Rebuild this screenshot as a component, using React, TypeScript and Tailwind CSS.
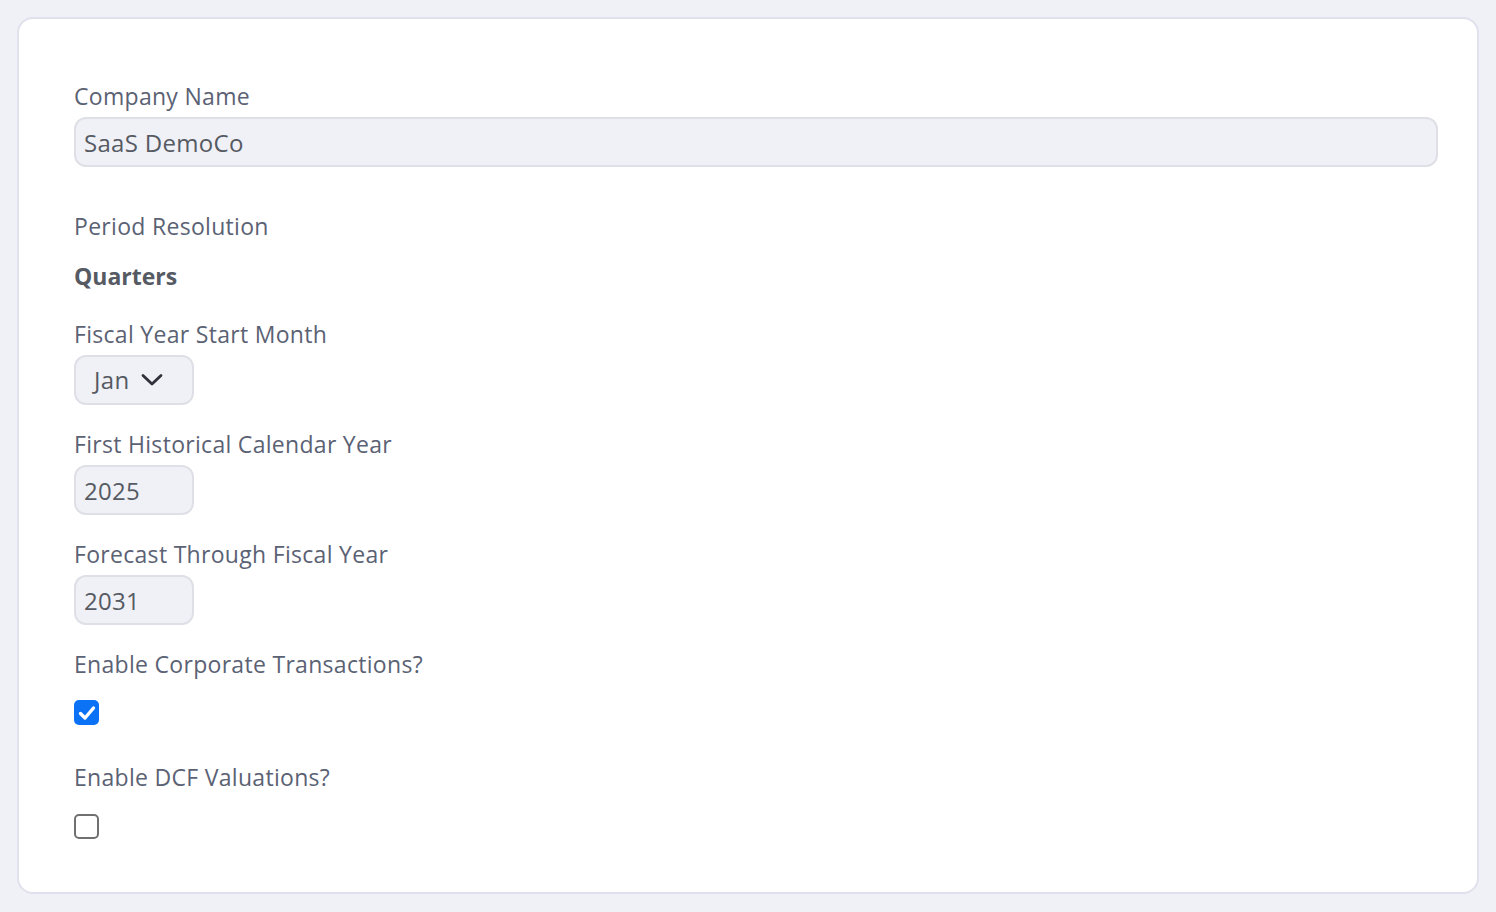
import { useState } from 'react';

const LABEL = 'block h-8 text-[23px] leading-8 tracking-[0.3px] text-[#5b6274]';
const FIELD =
  'h-[50px] rounded-xl border-2 border-[#dfe0e7] bg-[#f0f1f6] px-[8px] text-[24px] tracking-[0.3px] text-[#565a63] outline-none';

export default function App() {
  const [corporate, setCorporate] = useState(true);
  const [dcf, setDcf] = useState(false);

  return (
    <main className="min-h-screen bg-[#f0f1f6] p-[17px] font-['Open_Sans',sans-serif]">
      <div className="h-[877px] rounded-2xl border-2 border-[#e1e1ed] bg-white pl-[55px] pr-[39px] pt-[61px]">
        <label className={LABEL}>Company Name</label>
        <input
          defaultValue="SaaS DemoCo"
          className={`${FIELD} mt-[5px] block w-full`}
        />

        <div className="mt-[43px]">
          <span className={LABEL}>Period Resolution</span>
          <div className="mt-[18px] h-8 text-[23px] font-bold leading-8 text-[#565a63]">Quarters</div>
        </div>

        <div className="mt-[26px]">
          <label className={LABEL}>Fiscal Year Start Month</label>
          <div className={`${FIELD} mt-[5px] flex w-[120px] items-center gap-[12px] pl-[18px]`}>
            <span>Jan</span>
            <svg width="22" height="14" viewBox="0 0 22 14" fill="none">
              <path d="M2 2.5 L11 11 L20 2.5" stroke="#2f323a" strokeWidth="2.8" strokeLinecap="round" strokeLinejoin="round" />
            </svg>
          </div>
        </div>

        <div className="mt-[23px]">
          <label className={LABEL}>First Historical Calendar Year</label>
          <input defaultValue="2025" className={`${FIELD} mt-[5px] block w-[120px]`} />
        </div>

        <div className="mt-[23px]">
          <label className={LABEL}>Forecast Through Fiscal Year</label>
          <input defaultValue="2031" className={`${FIELD} mt-[5px] block w-[120px]`} />
        </div>

        <div className="mt-[23px]">
          <label className={LABEL}>Enable Corporate Transactions?</label>
          <Checkbox checked={corporate} onChange={() => setCorporate(!corporate)} className="mt-[20px]" />
        </div>

        <div className="mt-[36px]">
          <label className={LABEL}>Enable DCF Valuations?</label>
          <Checkbox checked={dcf} onChange={() => setDcf(!dcf)} className="mt-[21px]" />
        </div>
      </div>
    </main>
  );
}

function Checkbox({
  checked,
  onChange,
  className,
}: {
  checked: boolean;
  onChange: () => void;
  className?: string;
}) {
  return (
    <button
      type="button"
      onClick={onChange}
      className={`${className} flex h-[25px] w-[25px] items-center justify-center rounded-[5px] ${
        checked ? 'bg-[#0b72f6]' : 'border-2 border-[#707070] bg-white'
      }`}
    >
      {checked && (
        <svg width="18" height="16" viewBox="0 0 18 16" fill="none">
          <path d="M2.5 8.5 L7 13 L15.5 3" stroke="white" strokeWidth="3.4" strokeLinecap="round" strokeLinejoin="round" />
        </svg>
      )}
    </button>
  );
}
